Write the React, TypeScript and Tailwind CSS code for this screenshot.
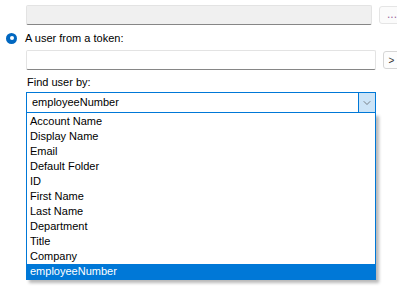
import { ChevronDown } from "lucide-react";

const OPTIONS = [
  "Account Name",
  "Display Name",
  "Email",
  "Default Folder",
  "ID",
  "First Name",
  "Last Name",
  "Department",
  "Title",
  "Company",
  "employeeNumber",
];

const SELECTED = "employeeNumber";

export default function App() {
  return (
    <div
      className="relative h-[302px] w-[397px] overflow-hidden bg-white text-[11px] text-black"
      style={{ fontFamily: '"Liberation Sans", Arial, sans-serif' }}
    >
      {/* path field, disabled */}
      <div className="flex items-center gap-[7px] pl-[26px] pt-[5px]">
        <div className="h-[20px] w-[346px] shrink-0 rounded-[2px] border border-[#e3e3e3] border-b-[#868686] bg-[#f0f0f0]" />
        <div className="flex h-[18px] w-[26px] shrink-0 items-center justify-center rounded-[3px] border border-[#e5e5e5] bg-[#fbfbfb] pb-[2px] text-[12px] text-[#9b6aa0]">
          ...
        </div>
      </div>

      {/* radio */}
      <div className="mt-[6px] flex items-center gap-[8px] pl-[6px]">
        <div className="flex h-[11px] w-[11px] items-center justify-center rounded-full bg-[#0067c0]">
          <div className="h-[4px] w-[4px] rounded-full bg-white" />
        </div>
        <span className="leading-[14px]">A user from a token:</span>
      </div>

      {/* token field */}
      <div className="mt-[5px] flex items-center gap-[7px] pl-[26px]">
        <div className="h-[20px] w-[350px] shrink-0 rounded-[2px] border border-[#e3e3e3] border-b-[#868686] bg-white" />
        <div className="flex h-[18px] w-[20px] shrink-0 items-center justify-center rounded-[3px] border border-[#d6d6d6] bg-[#fdfdfd] pr-[3px] text-[10px] text-[#333]">
          &gt;
        </div>
      </div>

      <div className="mt-[5px] pl-[27px] leading-[14px]">Find user by:</div>

      {/* combobox */}
      <div className="relative ml-[26px] mt-[3px] w-[350px]">
        <div className="flex h-[21px] items-stretch border border-[#0078d7] bg-white">
          <span className="flex flex-1 items-center pl-[5px]">{SELECTED}</span>
          <div className="flex w-[17px] items-center justify-center border-l border-[#0078d7] bg-[#cce4f7]">
            <ChevronDown size={12} strokeWidth={1.25} className="text-[#444]" />
          </div>
        </div>

        {/* open list */}
        <div className="absolute left-0 top-[21px] z-10 w-[350px] border border-[#0078d7] border-t-0 bg-white pt-[1px] shadow-[3px_3px_3px_rgba(0,0,0,0.28)]">
          {OPTIONS.map((opt) => (
            <div
              key={opt}
              className={
                opt === SELECTED
                  ? "flex h-[15px] items-center bg-[#0078d7] pl-[3px] text-white"
                  : "flex h-[15px] items-center pl-[3px]"
              }
            >
              {opt}
            </div>
          ))}
        </div>
      </div>
    </div>
  );
}
